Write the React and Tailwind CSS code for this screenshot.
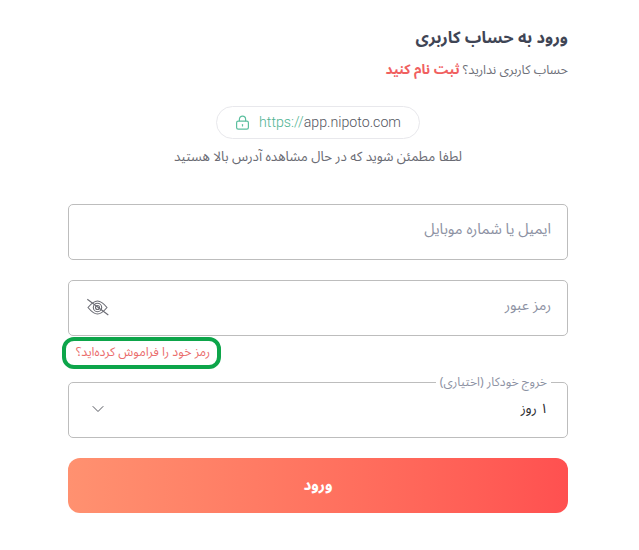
import React from 'react'
import { ChevronDown } from 'lucide-react'

const font = "font-['Noto_Sans_Arabic','Noto_Naskh_Arabic','DejaVu_Sans',sans-serif]"

const LockIcon = () => (
  <svg width="15" height="15" viewBox="0 0 15 15" fill="none" stroke="#5cbf9f" strokeWidth="1.2">
    <rect x="1.6" y="6.2" width="11.8" height="8" rx="1.6" />
    <path d="M4.4 6.2V4.2a3.1 3.1 0 0 1 6.2 0v2" />
    <path d="M7.5 9.6v1.4" strokeLinecap="round" />
  </svg>
)

const EyeOffIcon = () => (
  <svg width="22" height="22" viewBox="0 0 22 22" fill="none" stroke="#6a6b73" strokeWidth="1.1">
    <path d="M1 10.500C3.500 7.500 6.500 4 10.500 4S17.500 7.500 20 10.500c-2.500 3-5.500 6.500-9.500 6.500S3.500 13.500 1 10.500z" />
    <circle cx="10.500" cy="10.500" r="4.200" />
    <circle cx="10.500" cy="10.500" r="2" />
    <path d="M0.300 2.300L21.300 18" />
  </svg>
)

export default function App() {
  return (
    <div dir="rtl" className={`${font} w-[639px] h-[550px] bg-white overflow-hidden`}>
      <div className="w-[500px] ml-[68px] mr-[71px] pt-[27px]">
        <h1 className="text-[16.4px] leading-[22px] font-bold text-[#3f4555]">ورود به حساب کاربری</h1>
        <p className="mt-[11px] text-[12.6px] leading-[20px] text-[#6d6f78]">
          حساب کاربری ندارید؟ <span className="font-bold text-[13.7px] text-[#f0605f]">ثبت نام کنید</span>
        </p>

        <div className="flex flex-col items-center mt-[26px]">
          <div dir="ltr" className="flex items-center justify-center gap-[9px] w-[204px] h-[33px] rounded-full border border-[#e8e8ec] font-['Roboto',sans-serif] font-light text-[14.2px]">
            <LockIcon />
            <span>
              <span className="text-[#4fb392]">https://</span>
              <span className="text-[#55575f]">app.nipoto.com</span>
            </span>
          </div>
          <p className="mt-[8px] text-[13.3px] leading-[20px] text-[#6a6b73]">لطفا مطمئن شوید که در حال مشاهده آدرس بالا هستید</p>
        </div>

        <div className="flex items-center h-[56px] mt-[37px] px-[16px] pb-[4px] rounded-[5px] border border-[#bdbdbd] text-[14.8px] text-[#8d92a3]">
          ایمیل یا شماره موبایل
        </div>

        <div className="flex items-center justify-between h-[56px] mt-[20px] pr-[16px] pl-[18px] rounded-[5px] border border-[#bdbdbd] text-[14.5px] text-[#8d92a3]">
          <span className="-mt-[4px]">رمز عبور</span>
          <EyeOffIcon />
        </div>

        <div className="flex justify-end mt-[1px] -ml-[6px]">
          <a className="flex items-center justify-center w-[159px] h-[32px] pb-[2px] pl-[3px] rounded-[12px] border-[4px] border-[#0da54a] text-[12.4px] text-[#ea6c6c] whitespace-nowrap">
            رمز خود را فراموش کرده‌اید؟
          </a>
        </div>

        <fieldset className="h-[63px] mt-[6px] pr-[19px] pl-[19px] rounded-[5px] border border-[#bdbdbd]">
          <legend className="px-[4px] -mr-[3px] text-[12.2px] leading-[14px] text-[#8d92a3]">خروج خودکار (اختیاری)</legend>
          <div className="flex items-center justify-between h-[40px] text-[13.6px] text-[#2c2c30]">
            <span>۱ روز</span>
            <ChevronDown size={20} strokeWidth={1.2} color="#55575f" />
          </div>
        </fieldset>

        <button className="block w-full h-[55px] mt-[20px] rounded-[12px] bg-gradient-to-l from-[#ff5050] to-[#ff9170] text-white font-bold text-[15.2px]">
          ورود
        </button>
      </div>
    </div>
  )
}
